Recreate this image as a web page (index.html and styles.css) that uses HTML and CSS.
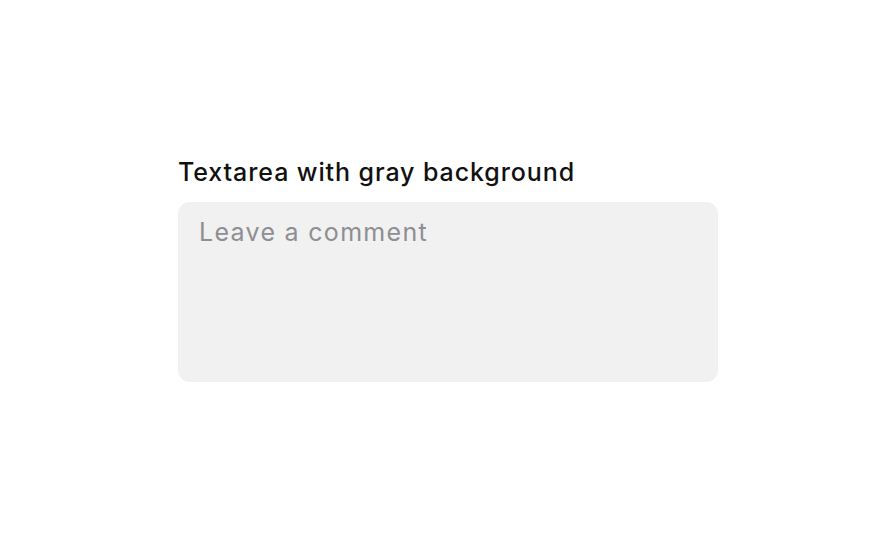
FILE: index.html
```html
<!DOCTYPE html>
<html lang="en">
<head>
    <meta charset="UTF-8">
    <meta name="viewport" content="width=device-width, initial-scale=1.0">
    <title>Textarea with gray background</title>
    <link rel="stylesheet" href="styles.css">
</head>
<body>
    <div class="page">
        <div class="field">
            <label for="comment" class="field-label">Textarea with gray background</label>
            <textarea id="comment" class="field-input" placeholder="Leave a comment"></textarea>
        </div>
    </div>
</body>
</html>
```

FILE: styles.css
```css
body { margin: 0; font-family: "Inter", "Noto Sans", sans-serif; background: #fff; }
.page { height: 100vh; display: flex; align-items: center; justify-content: center; padding-left: 4px; box-sizing: border-box; }
.field { width: 540px; display: flex; flex-direction: column; gap: 12px; margin-top: 2px; }
.field-label { font-size: 25px; line-height: 36px; font-weight: 500; color: #111; letter-spacing: 0.9px; }
.field-input { height: 180px; box-sizing: border-box; padding: 12px 20px 12px 21px; border: none; border-radius: 12px; background: #f1f1f1; font-family: inherit; font-size: 25px; line-height: 36px; letter-spacing: 1.3px; color: #111; resize: none; outline: none; }
.field-input::placeholder { color: #8e8e93; }
```
